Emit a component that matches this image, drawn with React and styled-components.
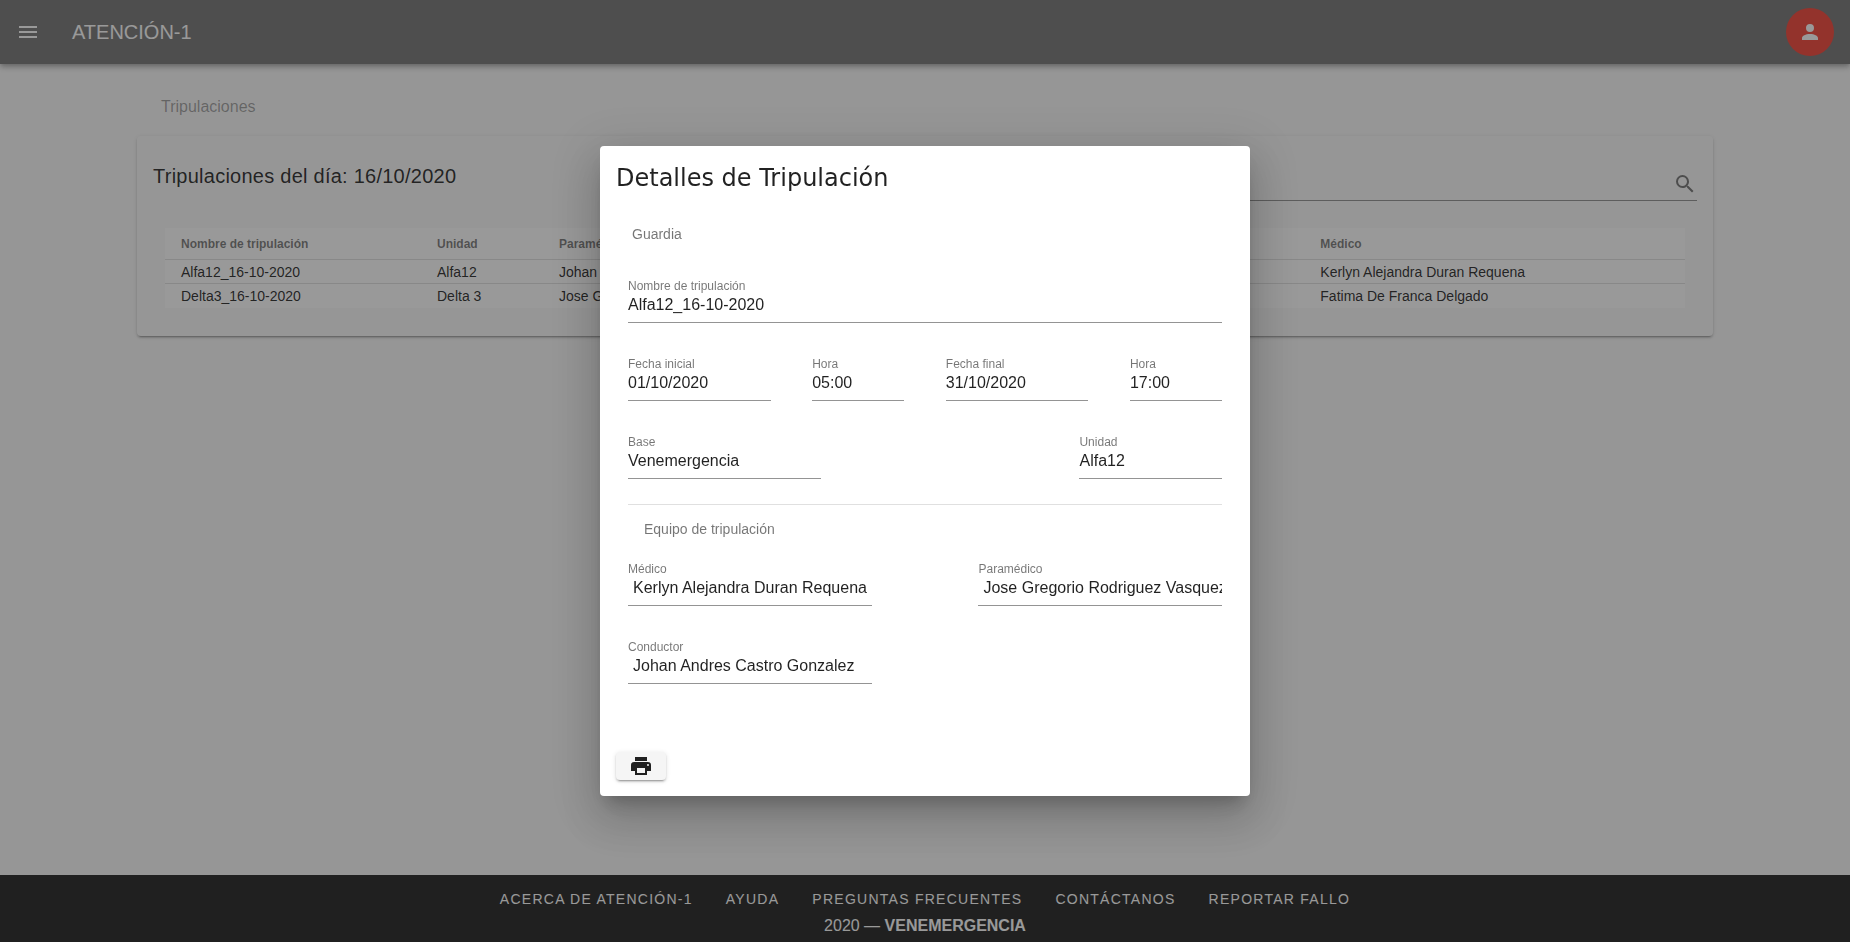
import React from "react";
import styled, { createGlobalStyle } from "styled-components";

const GlobalStyle = createGlobalStyle`
  *, *::before, *::after { box-sizing: border-box; }
  body {
    margin: 0;
    background: #fafafa;
    color: rgba(0, 0, 0, 0.87);
    font-family: "Liberation Sans", Arial, sans-serif;
    font-size: 16px;
    line-height: 24px;
  }
  button, input { font: inherit; color: inherit; }
`;

const Page = styled.div`
  display: flex;
  flex-direction: column;
  min-height: 100vh;
`;

const Svg = styled.svg`
  display: block;
  width: 24px;
  height: 24px;
  fill: currentColor;
`;

const Icon = ({ path }) => (
  <Svg viewBox="0 0 24 24" aria-hidden="true">
    <path d={path} />
  </Svg>
);

const icons = {
  menu: "M3,6H21V8H3V6M3,11H21V13H3V11M3,16H21V18H3V16Z",
  account:
    "M12,4A4,4 0 0,1 16,8A4,4 0 0,1 12,12A4,4 0 0,1 8,8A4,4 0 0,1 12,4M12,14C16.42,14 20,15.79 20,18V20H4V18C4,15.79 7.58,14 12,14Z",
  search:
    "M9.5,3A6.5,6.5 0 0,1 16,9.5C16,11.11 15.41,12.59 14.44,13.73L14.71,14H15.5L20.5,19L19,20.5L14,15.5V14.71L13.73,14.44C12.59,15.41 11.11,16 9.5,16A6.5,6.5 0 0,1 3,9.5A6.5,6.5 0 0,1 9.5,3M9.5,5C7,5 5,7 5,9.5C5,12 7,14 9.5,14C12,14 14,12 14,9.5C14,7 12,5 9.5,5Z",
  printer:
    "M18,3H6V7H18M19,12A1,1 0 0,1 18,11A1,1 0 0,1 19,10A1,1 0 0,1 20,11A1,1 0 0,1 19,12M16,19H8V14H16M19,8H5A3,3 0 0,0 2,11V17H6V21H18V17H22V11A3,3 0 0,0 19,8Z",
};

const AppBar = styled.header`
  display: flex;
  align-items: center;
  gap: 20px;
  height: 64px;
  padding: 0 16px 0 4px;
  background: #757575;
  color: #fff;
  box-shadow: 0 2px 4px -1px rgba(0, 0, 0, 0.2), 0 4px 5px rgba(0, 0, 0, 0.14),
    0 1px 10px rgba(0, 0, 0, 0.12);
`;

const AppTitle = styled.div`
  flex: 1;
  font-size: 20px;
`;

const RoundButton = styled.button`
  display: grid;
  place-items: center;
  width: 48px;
  height: 48px;
  padding: 0;
  border: 0;
  border-radius: 50%;
  background: ${(p) => (p.$filled ? "#f44336" : "transparent")};
`;

const Main = styled.main`
  flex: 1;
  width: 100%;
  max-width: 1600px;
  margin: 0 auto;
  padding: 31px 12px;
`;

const Crumb = styled.div`
  padding: 0 24px;
  margin-bottom: 17px;
  color: rgba(0, 0, 0, 0.38);
`;

const Card = styled.section`
  border-radius: 4px;
  padding-bottom: 28px;
  box-shadow: 0 3px 1px -2px rgba(0, 0, 0, 0.2), 0 2px 2px rgba(0, 0, 0, 0.14),
    0 1px 5px rgba(0, 0, 0, 0.12);
`;

const CardHead = styled.div`
  display: flex;
  padding: 24px 16px 27px;
`;

const CardTitle = styled.h2`
  margin: 0;
  font-size: 20px;
  font-weight: 400;
  line-height: 32px;
  letter-spacing: 0.0125em;
`;

const Spacer = styled.div`
  flex: 1;
`;

const Search = styled.label`
  flex: 1;
  display: flex;
  align-items: flex-end;
  padding-bottom: 4px;
  height: 41px;
  border-bottom: 1px solid rgba(0, 0, 0, 0.42);
  color: rgba(0, 0, 0, 0.54);
`;

const SearchInput = styled.input`
  flex: 1;
  min-width: 0;
  height: 24px;
  padding: 0;
  border: 0;
  outline: 0;
  background: transparent;
`;

const TableBox = styled.div`
  margin: 0 28px;
  background: #fff;
  overflow-x: auto;
`;

const Table = styled.table`
  width: 100%;
  table-layout: fixed;
  border-collapse: separate;
  border-spacing: 0;
  font-size: 14px;
  line-height: 16px;
  text-align: left;
`;

const Col = styled.col`
  width: ${(p) => p.$width || "auto"};
`;

const Th = styled.th`
  height: 32px;
  padding: 0 16px;
  border-bottom: 1px solid rgba(0, 0, 0, 0.12);
  color: rgba(0, 0, 0, 0.54);
  font-size: 12px;
  font-weight: 700;
`;

const Td = styled.td`
  height: 24px;
  padding: 0 16px;

  tr:not(:last-child) > & {
    border-bottom: 1px solid rgba(0, 0, 0, 0.12);
  }
`;

const Footer = styled.footer`
  display: flex;
  flex-direction: column;
  align-items: center;
  gap: 3px;
  padding: 12px 16px 4px;
  background: #212121;
  color: #fff;
`;

const FooterNav = styled.nav`
  display: flex;
  flex-wrap: wrap;
  justify-content: center;
  gap: 0 33px;
`;

const FooterLink = styled.a`
  color: inherit;
  font-size: 14px;
  letter-spacing: 0.09em;
  text-decoration: none;
  text-transform: uppercase;
`;

const Overlay = styled.div`
  position: fixed;
  inset: 0;
  display: grid;
  place-items: center;
  background: rgba(33, 33, 33, 0.46);
`;

const Dialog = styled.section`
  width: calc(100% - 48px);
  max-width: 650px;
  max-height: 90%;
  overflow-y: auto;
  padding: 16px;
  border-radius: 4px;
  background: #fff;
  box-shadow: 0 11px 15px -7px rgba(0, 0, 0, 0.2),
    0 24px 38px 3px rgba(0, 0, 0, 0.14), 0 9px 46px 8px rgba(0, 0, 0, 0.12);
`;

const DialogTitle = styled.h1`
  margin: 0 0 30px;
  font-family: "DejaVu Sans", sans-serif;
  font-size: 24px;
  font-weight: 400;
  line-height: 32px;
`;

const DialogBody = styled.div`
  padding: 0 12px;
  margin-bottom: 68px;
`;

const GroupTitle = styled.h2`
  margin: 0;
  padding-left: ${(p) => (p.$inset ? "16px" : "4px")};
  color: rgba(0, 0, 0, 0.54);
  font-size: 14px;
  font-weight: 400;
  line-height: 20px;
`;

const Rows = styled.div`
  display: flex;
  flex-direction: column;
  gap: 33px;
  margin-top: ${(p) => (p.$tight ? "22px" : "34px")};
`;

const Row = styled.div`
  display: flex;
  justify-content: space-between;
`;

const FieldBox = styled.div`
  width: ${(p) => p.$width};
`;

const Label = styled.label`
  display: block;
  color: rgba(0, 0, 0, 0.54);
  font-size: 12px;
  line-height: 16px;
`;

const Input = styled.input`
  display: block;
  width: 100%;
  height: 29px;
  padding: 0 0 6px;
  text-indent: ${(p) => (p.$indent ? "5px" : "0")};
  border: 0;
  border-bottom: 1px solid rgba(0, 0, 0, 0.42);
  border-radius: 0;
  outline: 0;
  background: transparent;
`;

const Divider = styled.hr`
  margin: 25px 0 14px;
  border: 0;
  border-top: 1px solid rgba(0, 0, 0, 0.12);
`;

const PrintButton = styled.button`
  display: grid;
  place-items: center;
  width: 50px;
  height: 28px;
  padding: 0;
  border: 0;
  border-radius: 4px;
  background: #f5f5f5;
  box-shadow: 0 3px 1px -2px rgba(0, 0, 0, 0.2), 0 2px 2px rgba(0, 0, 0, 0.14),
    0 1px 5px rgba(0, 0, 0, 0.12);
`;

const Field = ({ id, label, value, width = "100%", indent }) => (
  <FieldBox $width={width}>
    <Label htmlFor={id}>{label}</Label>
    <Input id={id} type="text" value={value} readOnly $indent={indent} />
  </FieldBox>
);

const columns = [
  { title: "Nombre de tripulación", width: "256px" },
  { title: "Unidad", width: "122px" },
  { title: "Paramédico" },
  { title: "Conductor" },
  { title: "Médico" },
];

const crews = [
  [
    "Alfa12_16-10-2020",
    "Alfa12",
    "Johan Andres Castro Gonzalez",
    "Jose Gregorio Rodriguez Vasquez",
    "Kerlyn Alejandra Duran Requena",
  ],
  [
    "Delta3_16-10-2020",
    "Delta 3",
    "Jose Gregorio Rodriguez Vasquez",
    "Johan Andres Castro Gonzalez",
    "Fatima De Franca Delgado",
  ],
];

const footerLinks = [
  "Acerca de Atención-1",
  "Ayuda",
  "Preguntas frecuentes",
  "Contáctanos",
  "Reportar fallo",
];

const CrewTable = () => (
  <TableBox>
    <Table>
      <colgroup>
        {columns.map((c) => (
          <Col key={c.title} $width={c.width} />
        ))}
      </colgroup>
      <thead>
        <tr>
          {columns.map((c) => (
            <Th key={c.title} scope="col">{c.title}</Th>
          ))}
        </tr>
      </thead>
      <tbody>
        {crews.map((crew) => (
          <tr key={crew[0]}>
            {crew.map((text) => (
              <Td key={text}>{text}</Td>
            ))}
          </tr>
        ))}
      </tbody>
    </Table>
  </TableBox>
);

const CrewDialog = () => (
  <Overlay>
    <Dialog role="dialog" aria-modal="true" aria-labelledby="dialog-title">
      <DialogTitle id="dialog-title">Detalles de Tripulación</DialogTitle>
      <DialogBody>
        <GroupTitle>Guardia</GroupTitle>
        <Rows>
          <Row>
            <Field id="name" label="Nombre de tripulación" value="Alfa12_16-10-2020" />
          </Row>
          <Row>
            <Field id="start-date" label="Fecha inicial" value="01/10/2020" width="24%" />
            <Field id="start-time" label="Hora" value="05:00" width="15.5%" />
            <Field id="end-date" label="Fecha final" value="31/10/2020" width="24%" />
            <Field id="end-time" label="Hora" value="17:00" width="15.5%" />
          </Row>
          <Row>
            <Field id="base" label="Base" value="Venemergencia" width="32.5%" />
            <Field id="unit" label="Unidad" value="Alfa12" width="24%" />
          </Row>
        </Rows>
        <Divider />
        <GroupTitle $inset>Equipo de tripulación</GroupTitle>
        <Rows $tight>
          <Row>
            <Field id="doctor" label="Médico" value="Kerlyn Alejandra Duran Requena" width="41%" indent />
            <Field id="paramedic" label="Paramédico" value="Jose Gregorio Rodriguez Vasquez" width="41%" indent />
          </Row>
          <Row>
            <Field id="driver" label="Conductor" value="Johan Andres Castro Gonzalez" width="41%" indent />
          </Row>
        </Rows>
      </DialogBody>
      <PrintButton type="button" aria-label="Imprimir">
        <Icon path={icons.printer} />
      </PrintButton>
    </Dialog>
  </Overlay>
);

export default function App() {
  return (
    <>
      <GlobalStyle />
      <Page>
        <AppBar>
          <RoundButton type="button" aria-label="Menú">
            <Icon path={icons.menu} />
          </RoundButton>
          <AppTitle>ATENCIÓN-1</AppTitle>
          <RoundButton type="button" aria-label="Cuenta" $filled>
            <Icon path={icons.account} />
          </RoundButton>
        </AppBar>
        <Main>
          <Crumb>Tripulaciones</Crumb>
          <Card>
            <CardHead>
              <CardTitle>Tripulaciones del día: 16/10/2020</CardTitle>
              <Spacer />
              <Search>
                <SearchInput type="text" aria-label="Buscar" />
                <Icon path={icons.search} />
              </Search>
            </CardHead>
            <CrewTable />
          </Card>
        </Main>
        <Footer>
          <FooterNav>
            {footerLinks.map((text) => (
              <FooterLink key={text} href="#">{text}</FooterLink>
            ))}
          </FooterNav>
          <div>
            2020 — <strong>VENEMERGENCIA</strong>
          </div>
        </Footer>
      </Page>
      <CrewDialog />
    </>
  );
}
